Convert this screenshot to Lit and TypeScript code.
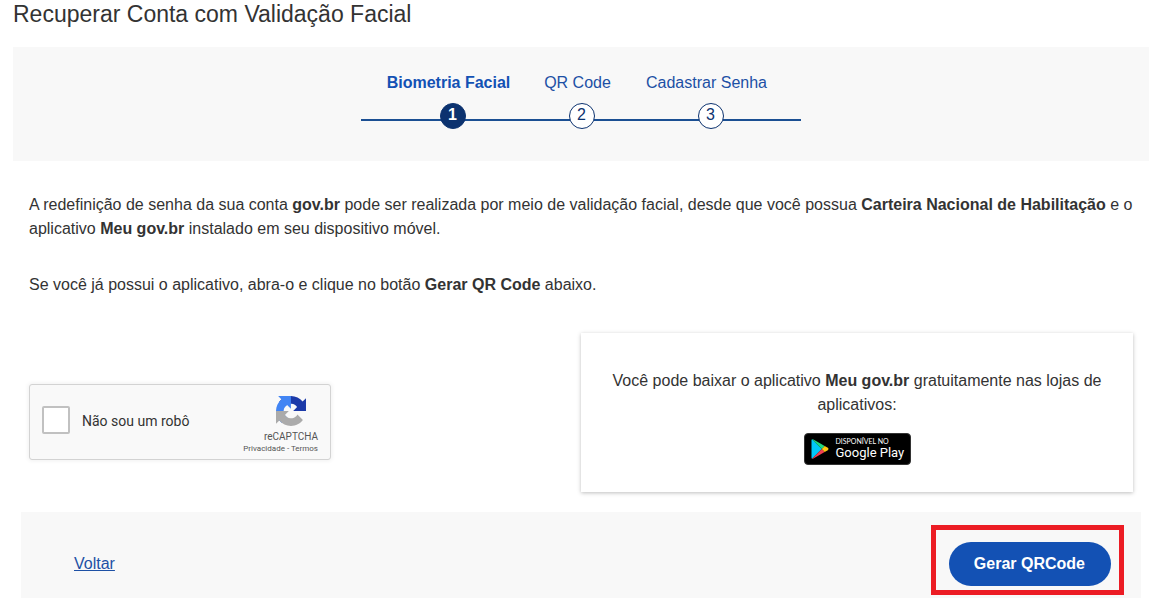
import { LitElement, html, css } from "lit";
import { customElement, state } from "lit/decorators.js";
import { classMap } from "lit/directives/class-map.js";

@customElement("step-progress")
class StepProgress extends LitElement {
  static styles = css`
    :host {
      display: flex;
      justify-content: center;
      padding: 24px 0 32px;
      background: #f8f8f8;
    }
    .steps {
      display: grid;
      grid-template-columns: repeat(3, 129px);
      margin: 0;
      padding: 0 30px 0 23px;
      list-style: none;
      background: linear-gradient(#1b4f93, #1b4f93) 0 48px / 100% 2px no-repeat;
    }
    .step {
      display: flex;
      flex-direction: column;
      align-items: center;
      gap: 8px;
      line-height: 24px;
      color: #1d50a5;
      white-space: nowrap;
    }
    .circle {
      box-sizing: border-box;
      width: 26px;
      height: 26px;
      margin-left: 8px;
      border: 1px solid #0c326f;
      border-radius: 50%;
      background: #fff;
      color: #0c326f;
      line-height: 22px;
      text-align: center;
    }
    .active {
      font-weight: bold;
      color: #1351b4;
    }
    .active .circle {
      background: #0c326f;
      color: #fff;
    }
  `;

  @state() private current = 0;
  private labels = ["Biometria Facial", "QR Code", "Cadastrar Senha"];

  render() {
    return html`<ol class="steps">
      ${this.labels.map(
        (label, i) => html`<li class=${classMap({ step: true, active: i === this.current })}>
          <span>${label}</span><span class="circle">${i + 1}</span>
        </li>`
      )}
    </ol>`;
  }
}

@customElement("robot-check")
class RobotCheck extends LitElement {
  static styles = css`
    :host {
      display: flex;
      box-sizing: border-box;
      width: 302px;
      height: 76px;
      padding: 0 12px;
      align-items: center;
      justify-content: space-between;
      border: 1px solid #d3d3d3;
      border-radius: 3px;
      background: #f9f9f9;
      box-shadow: 0 0 4px 1px rgba(0, 0, 0, 0.06);
      font-family: Roboto, sans-serif;
    }
    .check {
      display: flex;
      align-items: center;
      gap: 12px;
      padding-bottom: 4px;
      font-size: 14px;
      line-height: 16px;
      color: #333;
    }
    .box {
      appearance: none;
      box-sizing: border-box;
      width: 28px;
      height: 28px;
      margin: 0;
      border: 2px solid #c1c1c1;
      border-radius: 2px;
      background: #fff;
    }
    .box:checked {
      background: #4285f4;
    }
    .text {
      padding-top: 2px;
    }
    .brand {
      display: flex;
      flex-direction: column;
      align-items: flex-end;
      padding-top: 7px;
      color: #555;
    }
    .logo {
      width: 30px;
      height: 30px;
      margin: 0 12px 4px 0;
    }
    .name {
      font-size: 10px;
      line-height: 13px;
    }
    .links {
      font-size: 8px;
      line-height: 12px;
    }
    .links a {
      color: inherit;
      text-decoration: none;
    }
  `;

  render() {
    return html`
      <div class="check">
        <input class="box" type="checkbox" id="robot" />
        <label class="text" for="robot">Não sou um robô</label>
      </div>
      <div class="brand">
        <svg class="logo" viewBox="0 0 64 64" aria-hidden="true">
          <path
            fill="#1c3aa9"
            d="M64 31.955l-.033-1.37V4.687l-7.16 7.16C50.948 4.674 42.033.093 32.05.093c-10.4 0-19.622 4.96-25.458 12.64l11.736 11.86a15.55 15.55 0 0 1 4.754-5.334c2.05-1.6 4.952-2.906 8.968-2.906.485 0 .86.057 1.135.163 4.976.393 9.288 3.14 11.828 7.124l-8.307 8.307L64 31.953"
          />
          <path
            fill="#4285f4"
            d="M31.862.094l-1.37.033H4.594l7.16 7.16C4.58 13.147 0 22.06 0 32.046c0 10.4 4.96 19.622 12.64 25.458L24.5 45.768a15.55 15.55 0 0 1-5.334-4.754c-1.6-2.05-2.906-4.952-2.906-8.968 0-.485.057-.86.163-1.135.393-4.976 3.14-9.288 7.124-11.828l8.307 8.307L31.86.095"
          />
          <path
            fill="#ababab"
            d="M.001 32.045l.033 1.37v25.898l7.16-7.16c5.86 7.173 14.774 11.754 24.76 11.754 10.4 0 19.622-4.96 25.458-12.64l-11.736-11.86a15.55 15.55 0 0 1-4.754 5.334c-2.05 1.6-4.952 2.906-8.968 2.906-.485 0-.86-.057-1.135-.163-4.976-.393-9.288-3.14-11.828-7.124l8.307-8.307c-10.522.04-22.4.066-27.295-.005"
          />
        </svg>
        <span class="name">reCAPTCHA</span>
        <span class="links"><a href="#privacidade">Privacidade</a> - <a href="#termos">Termos</a></span>
      </div>
    `;
  }
}

@customElement("play-badge")
class PlayBadge extends LitElement {
  static styles = css`
    :host {
      display: inline-block;
    }
    .badge {
      box-sizing: border-box;
      display: flex;
      align-items: center;
      gap: 7px;
      width: 107px;
      height: 32px;
      padding: 0 6px;
      border: 1px solid #333;
      border-radius: 4px;
      background: #000;
      color: #fff;
      text-decoration: none;
      text-align: left;
      white-space: nowrap;
    }
    .play {
      flex: none;
      width: 18px;
      height: 20px;
    }
    .words {
      display: flex;
      flex-direction: column;
      padding-bottom: 1px;
    }
    .small {
      font: 7px/8px Lato, sans-serif;
    }
    .store {
      font: 13px/15px Roboto, sans-serif;
    }
  `;

  render() {
    return html`<a class="badge" href="#google-play">
      <svg class="play" viewBox="0 0 17 20" aria-hidden="true">
        <path fill="#00c8f8" d="M.6.3 10.3 10 .6 19.7Q0 19.400 0 18.600V1.400Q0 .6.6.3Z" />
        <path fill="#20d880" d="M.6.3Q1.100 0 1.900.4L13.200 6.900 10.300 10Z" />
        <path fill="#f04050" d="M.6 19.700Q1.100 20 1.900 19.600L13.200 13.100 10.300 10Z" />
        <path fill="#ffc810" d="M13.200 6.900 16.300 8.800Q17.600 10 16.300 11.200L13.200 13.100 10.300 10Z" />
      </svg>
      <span class="words"><span class="small">DISPONÍVEL NO</span><span class="store">Google Play</span></span>
    </a>`;
  }
}

@customElement("app-root")
class AppRoot extends LitElement {
  static styles = css`
    :host {
      display: block;
      padding: 0 2px 0 13px;
      background: #fff;
      color: #333;
      font: 16px/24px "Liberation Sans", Arial, sans-serif;
    }
    .title {
      margin: 0;
      padding-bottom: 19px;
      font-size: 23px;
      font-weight: normal;
      line-height: 28px;
    }
    .content {
      padding: 32px 16px 20px;
    }
    .text {
      margin: 0 0 32px;
    }
    .columns {
      display: grid;
      grid-template-columns: 1fr 1fr;
      align-items: start;
      padding-top: 4px;
    }
    .captcha {
      margin-top: 51px;
    }
    .card {
      padding: 36px 24px 27px;
      background: #fff;
      box-shadow: 0 1px 4px rgba(0, 0, 0, 0.26);
      text-align: center;
    }
    .card-text {
      margin: 0 0 16px;
    }
    .store {
      vertical-align: top;
    }
    .footer {
      display: flex;
      align-items: center;
      justify-content: space-between;
      margin: 0 8px;
      padding: 13px 17px 3px 53px;
      background: #f8f8f8;
    }
    .back {
      padding-top: 8px;
      color: #1d50a5;
      text-decoration: underline;
    }
    .highlight {
      display: flex;
      padding: 12px 8px 4px 13px;
      border: 5px solid #ec1c24;
    }
    .primary {
      height: 44px;
      padding: 0 26px 0 25px;
      border: 0;
      border-radius: 22px;
      background: #1351b4;
      color: #fff;
      font: bold 16px/24px "Liberation Sans", Arial, sans-serif;
      cursor: pointer;
    }
  `;

  render() {
    return html`
      <h1 class="title">Recuperar Conta com Validação Facial</h1>
      <step-progress></step-progress>
      <main class="content">
        <p class="text">
          A redefinição de senha da sua conta <b>gov.br</b> pode ser realizada por meio de validação facial, desde que
          você possua <b>Carteira Nacional de Habilitação</b> e o aplicativo <b>Meu gov.br</b> instalado em seu
          dispositivo móvel.
        </p>
        <p class="text">
          Se você já possui o aplicativo, abra-o e clique no botão <b>Gerar QR Code</b> abaixo.
        </p>
        <div class="columns">
          <robot-check class="captcha"></robot-check>
          <section class="card">
            <p class="card-text">
              Você pode baixar o aplicativo <b>Meu gov.br</b> gratuitamente nas lojas de aplicativos:
            </p>
            <play-badge class="store"></play-badge>
          </section>
        </div>
      </main>
      <footer class="footer">
        <a class="back" href="#voltar">Voltar</a>
        <div class="highlight"><button class="primary" type="button">Gerar QRCode</button></div>
      </footer>
    `;
  }
}
